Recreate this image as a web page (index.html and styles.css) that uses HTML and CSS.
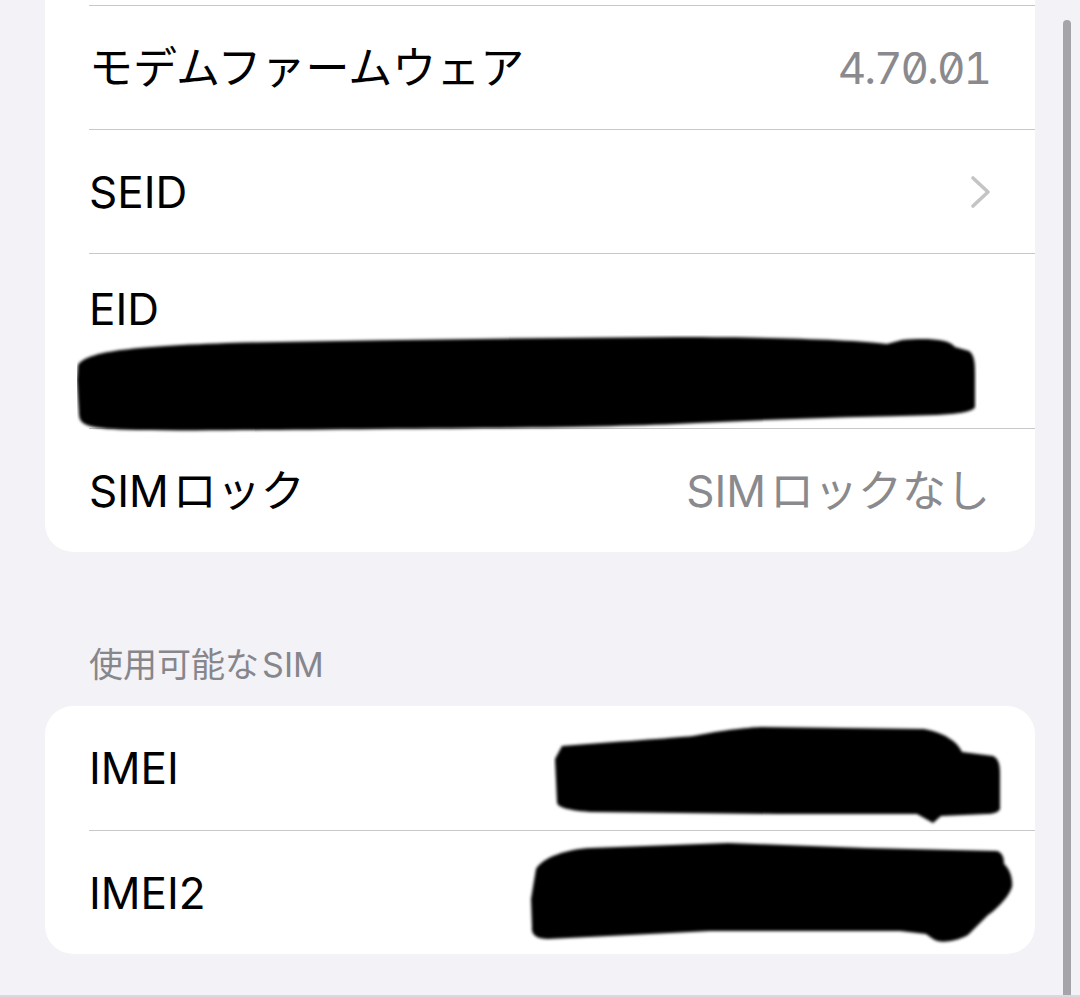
FILE: index.html
```html
<!DOCTYPE html>
<html lang="ja">
<head>
  <meta charset="UTF-8">
  <meta name="viewport" content="width=device-width, initial-scale=1.0">
  <title>情報</title>
  <link rel="stylesheet" href="styles.css">
</head>
<body>
  <div class="screen">
    <div class="list">
      <div class="card card-cut">
        <div class="row">
          <span class="label">モデムファームウェア</span>
          <span class="value mono">4.70.01</span>
        </div>
        <div class="row">
          <span class="label">SEID</span>
          <svg class="chevron" width="22" height="34" viewBox="0 0 22 34">
            <path d="M3 3 L18 17 L3 31" fill="none" stroke="#c4c4c7" stroke-width="3.6" stroke-linecap="round" stroke-linejoin="round"/>
          </svg>
        </div>
        <div class="row row-tall">
          <span class="label">EID</span>
          <svg class="blob blob-eid" width="900" height="100" viewBox="0 0 900 100">
            <defs><filter id="soft1"><feGaussianBlur stdDeviation="1.4"/></filter></defs>
            <path filter="url(#soft1)" d="M1 30 C 10 18, 40 12, 150 8 C 300 5, 450 3, 600 2 C 700 2, 780 5, 810 9 L 825 5 C 850 3, 872 4, 878 12 L 892 16 C 898 20, 898 30, 898 40 L 898 72 C 896 77, 880 79, 860 80 C 780 82, 700 84, 620 88 C 540 92, 450 93, 300 94 C 200 95, 120 96, 60 95 C 10 94, 3 90, 2 80 L 0 45 Z" fill="#000"/>
          </svg>
        </div>
        <div class="row">
          <span class="label">SIM&#8202;ロック</span>
          <span class="value">SIM&#8202;ロックなし</span>
        </div>
      </div>

      <div class="section-title">使用可能な&#8202;SIM</div>

      <div class="card">
        <div class="row">
          <span class="label">IMEI</span>
          <svg class="blob blob-imei" width="450" height="102" viewBox="0 0 450 102">
            <defs><filter id="soft2"><feGaussianBlur stdDeviation="1.4"/></filter></defs>
            <path filter="url(#soft2)" d="M9 22 C 60 18, 120 14, 140 12 C 170 6, 200 3, 209 3 L 371 5 C 390 8, 405 18, 409 28 L 440 32 C 447 35, 447 45, 447 50 L 447 85 C 446 88, 440 90, 433 90 L 388 92 L 380 99 L 364 90 L 226 90 L 37 88 C 10 86, 4 82, 4 78 L 2 35 Z" fill="#000"/>
          </svg>
        </div>
        <div class="row">
          <span class="label">IMEI2</span>
          <svg class="blob blob-imei2" width="490" height="110" viewBox="0 0 490 110">
            <defs><filter id="soft3"><feGaussianBlur stdDeviation="1.4"/></filter></defs>
            <path filter="url(#soft3)" d="M8 30 C 15 18, 40 10, 62 9 L 200 4 L 338 9 L 469 12 C 476 14, 476 22, 476 25 C 482 30, 485 40, 484 48 C 480 60, 466 72, 460 76 L 440 96 C 425 104, 410 104, 405 100 L 398 95 L 372 92 L 182 92 L 20 100 C 8 100, 3 95, 4 88 L 3 60 Z" fill="#000"/>
          </svg>
        </div>
      </div>
    </div>
    <div class="scrollbar"></div>
  </div>
</body>
</html>
```

FILE: styles.css
```css
body {
  margin: 0;
  padding: 0;
  background-color: #f2f2f7;
  font-family: Inter, "Noto Sans CJK JP", sans-serif;
  color: #000;
}
.screen {
  position: relative;
  height: 995px;
  overflow: hidden;
  border-bottom: 2px solid #d9d9de;
}
.list {
  width: 990px;
  padding-left: 45px;
}
.card {
  background-color: #fff;
  border-radius: 28px;
  overflow: hidden;
}
.card-cut {
  border-top-left-radius: 0;
  border-top-right-radius: 0;
  padding-top: 5px;
}
.row {
  display: flex;
  align-items: center;
  justify-content: space-between;
  height: 124px;
  box-sizing: border-box;
  margin-left: 44px;
  padding-right: 45px;
  border-top: 1px solid #c8c8cb;
}
.card:not(.card-cut) .row:first-child {
  border-top: none;
}
.label {
  font-size: 44px;
  line-height: 50px;
  white-space: nowrap;
}
.value {
  font-size: 44px;
  line-height: 50px;
  color: #8a8a8e;
  white-space: nowrap;
}
.mono {
  font-feature-settings: "zero" 1, "tnum" 1;
  letter-spacing: -2px;
}
.chevron {
  display: block;
  margin-right: -2px;
}
.row-tall {
  height: 175px;
  flex-direction: column;
  align-items: flex-start;
  justify-content: flex-start;
  padding-top: 30px;
}
.blob {
  display: block;
  flex-shrink: 0;
}
.blob-eid {
  margin-left: -12px;
  margin-top: 1px;
}
.blob-imei {
  margin-right: -13px;
  margin-top: 14px;
}
.blob-imei2 {
  margin-right: -28px;
  margin-top: 2px;
}
.section-title {
  margin: 93px 0 21px 44px;
  font-size: 34px;
  line-height: 40px;
  color: #86868b;
}
.scrollbar {
  position: absolute;
  left: 1063px;
  top: 20px;
  width: 8px;
  height: 1000px;
  border-radius: 4px;
  background-color: #a4a4a9;
}
```
